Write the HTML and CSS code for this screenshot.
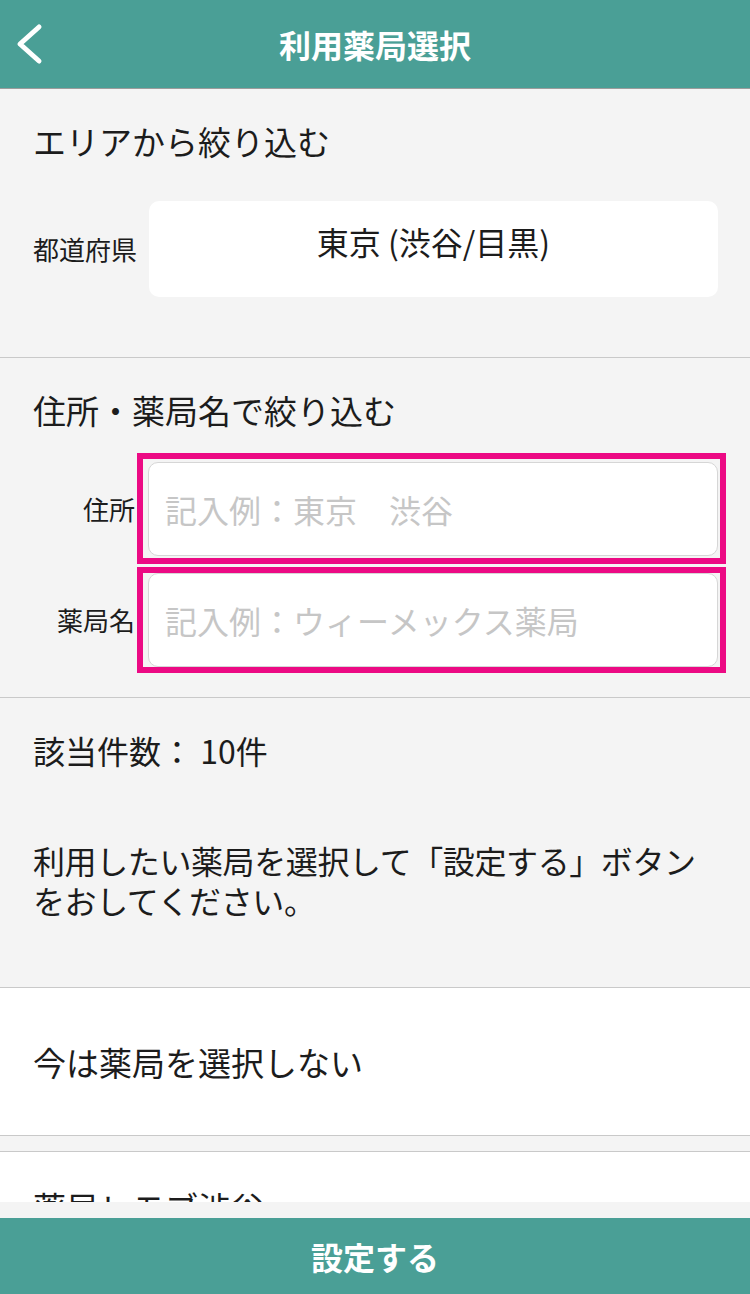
FILE: index.html
```html
<!DOCTYPE html>
<html lang="ja">
<head>
  <meta charset="UTF-8">
  <meta name="viewport" content="width=device-width, initial-scale=1.0">
  <title>利用薬局選択</title>
  <link rel="stylesheet" href="styles.css">
</head>
<body>
  <header class="nav">
    <a class="back" href="#" aria-label="戻る">
      <svg width="60" height="88" viewBox="0 0 60 88"><path d="M39 27 L20 44 L39 61" fill="none" stroke="#fff" stroke-width="5" stroke-linecap="round" stroke-linejoin="round"/></svg>
    </a>
    <h1>利用薬局選択</h1>
    <span></span>
  </header>

  <main class="content">
    <section class="block area">
      <h2>エリアから絞り込む</h2>
      <div class="field">
        <label>都道府県</label>
        <div class="select">東京 (渋谷/目黒)</div>
      </div>
    </section>

    <section class="block search">
      <h2>住所・薬局名で絞り込む</h2>
      <div class="field marked">
        <label>住所</label>
        <div class="hl"><input type="text" placeholder="記入例：東京　渋谷"></div>
      </div>
      <div class="field marked">
        <label>薬局名</label>
        <div class="hl tight"><input type="text" placeholder="記入例：ウィーメックス薬局"></div>
      </div>
    </section>

    <section class="block result">
      <p class="count">該当件数： 10件</p>
      <p class="note">利用したい薬局を選択して「設定する」ボタン<br>をおしてください。</p>
    </section>

    <ul class="shops">
      <li class="none">今は薬局を選択しない</li>
      <li class="shop">薬局レモブ渋谷</li>
    </ul>
  </main>

  <footer class="bottom">
    <button>設定する</button>
  </footer>
</body>
</html>
```

FILE: styles.css
```css
body {
  margin: 0;
  height: 1294px;
  display: flex;
  flex-direction: column;
  overflow: hidden;
  background: #f4f4f4;
  font-family: "Noto Sans CJK JP", sans-serif;
  color: #1c1c1c;
}
.nav {
  height: 88px;
  flex: none;
  display: grid;
  grid-template-columns: 1fr auto 1fr;
  align-items: center;
  background: #4a9f96;
  border-bottom: 1px solid #9c9c9c;
}
.back {
  display: block;
  width: 60px;
  height: 88px;
}
.back svg {
  display: block;
}
.nav h1 {
  margin: 0;
  font-size: 32px;
  font-weight: bold;
  color: #fff;
  line-height: 44px;
}
.content {
  flex: 1;
  overflow: hidden;
}
.block {
  padding: 30px 32px 0 33px;
  border-bottom: 1px solid #c9c9c9;
}
.block h2 {
  margin: 0;
  font-size: 33px;
  font-weight: normal;
  line-height: 44px;
}
.area {
  padding-bottom: 60px;
}
.area h2 {
  margin-bottom: 38px;
}
.field {
  display: flex;
  align-items: center;
}
.field label {
  width: 104px;
  flex: none;
  text-align: right;
  white-space: nowrap;
  font-size: 26px;
  line-height: 36px;
}
.select {
  flex: 1;
  height: 96px;
  box-sizing: border-box;
  margin-left: 12px;
  padding-top: 18px;
  background: #fff;
  border-radius: 10px;
  text-align: center;
  font-size: 32px;
  line-height: 44px;
}
.search {
  padding-bottom: 24px;
}
.search h2 {
  margin-bottom: 21px;
}
.marked {
  margin-right: -8px;
}
.marked label {
  padding-right: 2px;
  box-sizing: border-box;
}
.marked + .marked {
  margin-top: 3px;
}
.hl {
  flex: 1;
  padding: 3px 2px 2px 5px;
  border: 6px solid #ec0a84;
}
.hl.tight {
  padding-top: 0;
  padding-bottom: 0;
}
.hl input {
  display: block;
  width: 100%;
  height: 94px;
  box-sizing: border-box;
  padding: 0 16px;
  border: 1px solid #d6d6d6;
  border-radius: 10px;
  background: #fff;
  font-family: inherit;
  font-size: 32px;
  color: #1c1c1c;
  outline: none;
}
.hl input::placeholder {
  color: #c6c6c6;
}
.result {
  padding-bottom: 67px;
}
.result p {
  margin: 0;
  font-size: 32px;
}
.count {
  line-height: 44px;
}
.note {
  margin-top: 68px !important;
  line-height: 40px;
  letter-spacing: -0.4px;
  white-space: nowrap;
}
.shops {
  list-style: none;
  margin: 0;
  padding: 0;
}
.shops li {
  background: #fff;
  padding: 0 33px;
  font-size: 33px;
}
.none {
  height: 147px;
  display: flex;
  align-items: center;
  border-bottom: 1px solid #c9c9c9;
}
.shop {
  margin-top: 15px;
  border-top: 1px solid #c9c9c9;
  padding-top: 33px !important;
  padding-bottom: 40px !important;
  line-height: 44px;
}
.bottom {
  flex: none;
  padding-top: 16px;
  background: #f4f4f4;
}
.bottom button {
  display: block;
  width: 100%;
  height: 76px;
  border: none;
  background: #4a9f96;
  color: #fff;
  font-family: inherit;
  font-size: 32px;
  font-weight: bold;
}
```
